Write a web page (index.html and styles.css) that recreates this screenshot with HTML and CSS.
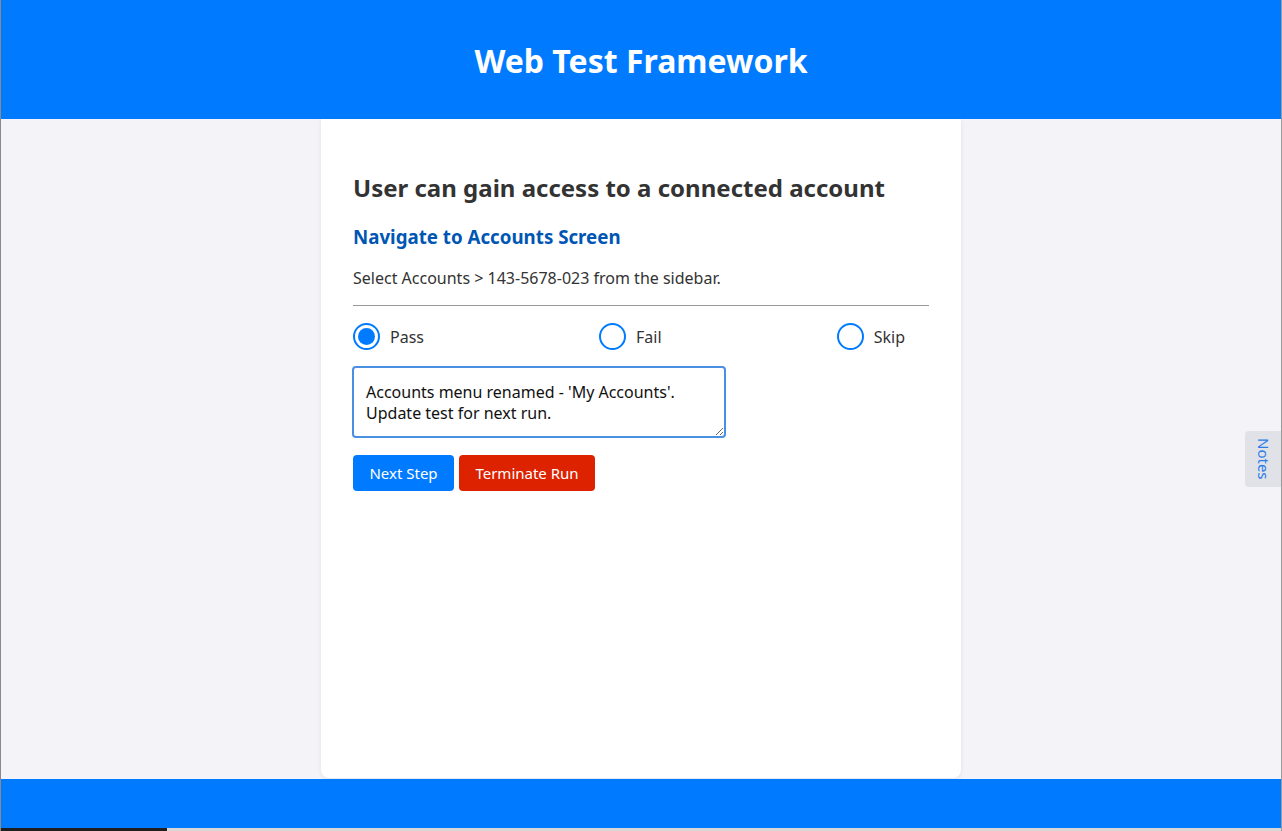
FILE: index.html
```html
<!DOCTYPE html>
<html>
<head>
<meta charset="utf-8">
<link rel="stylesheet" href="styles.css">
</head>
<body>
<div class="app">
  <header class="topbar"><h1>Web Test Framework</h1></header>
  <main class="main">
    <section class="card">
      <h2 class="test-title">User can gain access to a connected account</h2>
      <h3 class="step-title">Navigate to Accounts Screen</h3>
      <p class="step-desc">Select Accounts &gt; 143-5678-023 from the sidebar.</p>
      <hr class="divider">
      <div class="results">
        <label class="radio"><span class="dot checked"></span>Pass</label>
        <label class="radio"><span class="dot"></span>Fail</label>
        <label class="radio"><span class="dot"></span>Skip</label>
      </div>
      <textarea class="notes-input">Accounts menu renamed - 'My Accounts'.
Update test for next run.</textarea>
      <div class="actions">
        <button class="btn btn-primary">Next Step</button>
        <button class="btn btn-danger">Terminate Run</button>
      </div>
    </section>
  </main>
  <footer class="bottombar"></footer>
</div>
<div class="notes-tab"><span>Notes</span></div>
<div class="taskstrip"><span class="dark"></span><span class="light"></span></div>
</body>
</html>
```

FILE: styles.css
```css
* { box-sizing: border-box; }
html, body { margin: 0; padding: 0; }
body {
  font-family: "Noto Sans", "Open Sans", sans-serif;
  background: #f4f4f8;
  height: 831px;
  overflow: hidden;
  border-left: 1px solid #8a8a8a;
  border-right: 1px solid #9a9a9a;
  position: relative;
}
.app {
  display: flex;
  flex-direction: column;
  height: 828px;
}
.topbar {
  background: #007bff;
  height: 119px;
  display: flex;
  align-items: center;
  justify-content: center;
  flex: none;
}
.topbar h1 {
  margin: 0;
  color: #fff;
  font-size: 32px;
  font-weight: 700;
  padding-top: 1px;
}
.main {
  flex: 1;
  display: flex;
  justify-content: center;
}
.card {
  width: 640px;
  background: #fff;
  border-radius: 0 0 8px 8px;
  box-shadow: 0 1px 4px rgba(0,0,0,0.08);
  padding: 54px 32px 32px;
  margin-bottom: 1px;
}
.test-title {
  margin: 0;
  font-size: 24px;
  font-weight: 700;
  color: #333;
  line-height: 30px;
}
.step-title {
  margin: 21px 0 0;
  font-size: 18.72px;
  font-weight: 700;
  color: #0056b3;
  line-height: 26px;
}
.step-desc {
  margin: 17px 0 0;
  font-size: 16px;
  color: #333;
  line-height: 22px;
}
.divider {
  margin: 16px 0 0;
  border: 0;
  border-top: 1px solid #999;
}
.results {
  display: flex;
  justify-content: space-between;
  margin-top: 17px;
  padding-right: 24px;
}
.radio {
  display: flex;
  align-items: center;
  gap: 10px;
  font-size: 16px;
  color: #333;
}
.dot {
  width: 27px;
  height: 27px;
  border: 2px solid #007bff;
  border-radius: 50%;
  display: inline-flex;
  align-items: center;
  justify-content: center;
}
.dot.checked::after {
  content: "";
  width: 17px;
  height: 17px;
  border-radius: 50%;
  background: #007bff;
}
.notes-input {
  display: block;
  margin-top: 16px;
  margin-left: -1px;
  width: 374px;
  height: 72px;
  border: 2px solid #4a90e2;
  border-radius: 4px;
  padding: 14px 12px 10px;
  font-family: "Noto Sans", sans-serif;
  font-size: 16px;
  line-height: 21px;
  color: #111;
  resize: both;
  outline: none;
}
.actions {
  display: flex;
  gap: 5px;
  margin-top: 17px;
}
.btn {
  height: 36px;
  border: 0;
  border-radius: 4px;
  color: #fff;
  font-family: "Noto Sans", sans-serif;
  font-size: 15px;
  padding: 0;
}
.btn-primary { background: #007bff; width: 101px; }
.btn-danger { background: #dd2200; width: 136px; }
.bottombar {
  background: #007bff;
  height: 49px;
  flex: none;
}
.notes-tab {
  position: absolute;
  right: -1px;
  top: 431px;
  width: 37px;
  height: 56px;
  background: #e1e2e8;
  border-radius: 4px 0 0 4px;
  display: flex;
  align-items: center;
  justify-content: center;
}
.notes-tab span {
  writing-mode: vertical-rl;
  color: #2b7de9;
  font-size: 15px;
}
.taskstrip {
  display: flex;
  height: 3px;
}
.taskstrip .dark { width: 166px; background: #1e1e1e; }
.taskstrip .light { flex: 1; background: #d8d8d8; }
```
